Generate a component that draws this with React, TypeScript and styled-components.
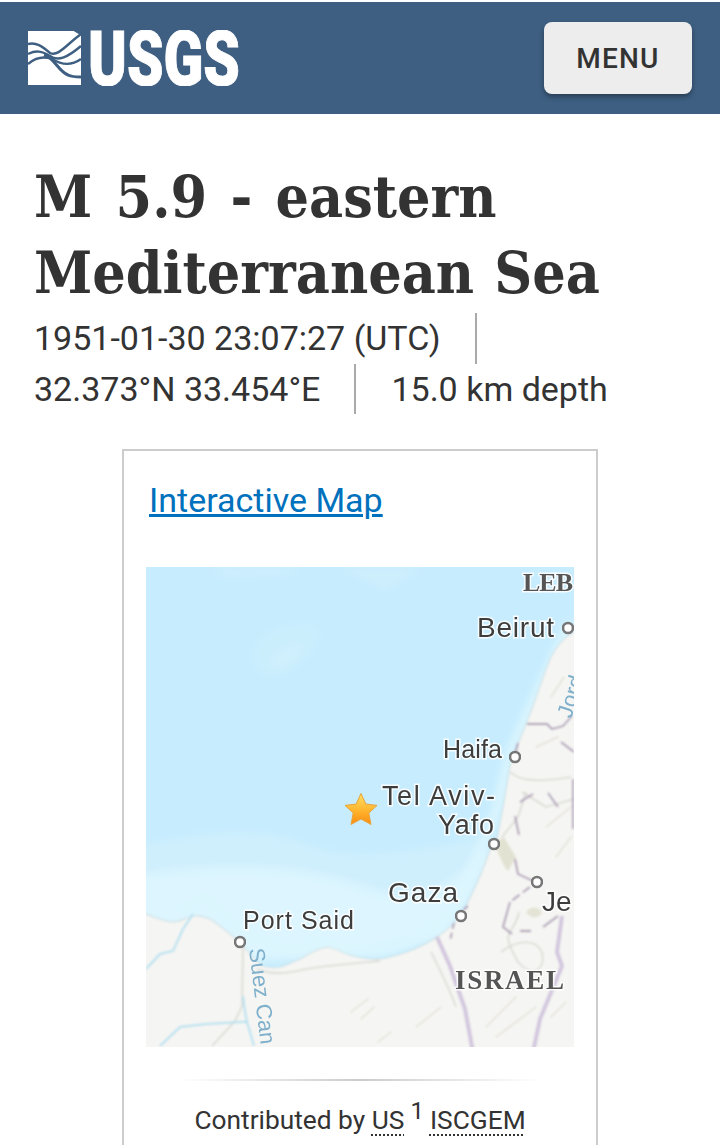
import React from "react";
import styled, { createGlobalStyle } from "styled-components";

const Global = createGlobalStyle`
  html, body { margin: 0; padding: 0; background: #fff; }
  body { font-family: Roboto, "Liberation Sans", sans-serif; color: #333; }
`;

const Page = styled.div`
  height: 1145px;
  overflow: hidden;
  padding-top: 2px;
  box-sizing: border-box;
`;

const Header = styled.header`
  height: 112px;
  background: #3e5f82;
  display: flex;
  align-items: center;
  justify-content: space-between;
  padding: 0 28px;
  box-sizing: border-box;
`;

const LogoSvg = styled.svg`
  display: block;
  width: 212px;
  height: 56px;
`;

const LogoWord = styled.text`
  font-family: Roboto, "Liberation Sans", sans-serif;
  font-weight: 900;
  font-size: 76px;
  fill: #fff;
  stroke: #fff;
  stroke-width: 1px;
`;

const MenuButton = styled.button`
  width: 148px;
  height: 72px;
  border: 0;
  border-radius: 8px;
  background: #ededed;
  box-shadow: 0 3px 5px rgba(0, 0, 0, 0.35);
  color: #333;
  font-family: Roboto, sans-serif;
  font-size: 28px;
  font-weight: 500;
  letter-spacing: 1.2px;
  padding: 0;
`;

const Main = styled.main`
  padding: 0 34px;
`;

const Title = styled.h1`
  margin: 45px 0 0;
  font-family: "DejaVu Serif Condensed", "DejaVu Serif", serif;
  font-weight: 700;
  font-size: 58.5px;
  line-height: 76px;
  word-spacing: 2px;
  color: #333;
`;

const TitleLead = styled.span`
  word-spacing: 5px;
`;

const MetaList = styled.ul`
  list-style: none;
  margin: 2px 0 0;
  padding: 0;
  display: flex;
  flex-wrap: wrap;
`;

const MetaItem = styled.li<{ $last?: boolean }>`
  font-size: 34px;
  line-height: 50.5px;
  color: #333;
  padding-right: 34px;
  margin-right: 35px;
  border-right: ${(p) => (p.$last ? "0" : "2px solid #aaa")};
`;

const Card = styled.section`
  width: 476px;
  height: 800px;
  box-sizing: border-box;
  margin: 35px auto 0;
  border: 2px solid #ccc;
  padding: 26px 22px 0;
`;

const MapLink = styled.a`
  display: block;
  font-size: 34px;
  line-height: 46px;
  color: #0071bc;
  text-decoration: underline;
  margin-left: 3px;
`;

const MapSvg = styled.svg`
  display: block;
  width: 428px;
  height: 480px;
  margin-top: 44px;
`;

const MapLabel = styled.text<{ $serif?: boolean; $size?: number }>`
  font-family: ${(p) => (p.$serif ? '"Liberation Serif", serif' : '"Liberation Sans", sans-serif')};
  font-weight: ${(p) => (p.$serif ? 700 : 400)};
  font-size: ${(p) => p.$size ?? 28}px;
  fill: ${(p) => (p.$serif ? "#555" : "#3c3c3c")};
  stroke: rgba(255, 255, 255, 0.85);
  stroke-width: 3px;
  paint-order: stroke;
`;

const WaterLabel = styled.text`
  font-family: "Liberation Sans", sans-serif;
  font-size: 22px;
  fill: #7fb0cb;
`;

const Divider = styled.hr`
  width: 364px;
  height: 2px;
  border: 0;
  margin: 32px auto 0;
  background: linear-gradient(to right, rgba(0, 0, 0, 0), rgba(0, 0, 0, 0.2), rgba(0, 0, 0, 0));
`;

const Contributors = styled.p`
  margin: 19px 0 0;
  text-align: center;
  font-size: 26.3px;
  line-height: 40px;
  color: #333;
  white-space: nowrap;
`;

const Abbr = styled.abbr`
  text-decoration: underline dotted #333 2px;
  text-underline-offset: 5px;
`;

const Sup = styled.sup`
  font-size: 24px;
  line-height: 0;
  margin: 0 6px;
`;

const cities: [number, number][] = [
  [422, 61],
  [369, 190],
  [348, 277],
  [315, 349],
  [391, 315],
  [94, 375],
];

const coast =
  "M-10 343 L0 347 C10 351 20 355 27 355 C35 355 42 349 49 349 C55 348 60 351 64 352 C74 358 85 368 94 375 C102 385 110 395 117 399 C124 401 130 401 134 400 C142 398 148 394 154 392 C163 387 172 381 181 380 C190 381 198 387 207 389 C216 391 225 393 234 392 C243 391 252 388 261 385 C272 381 282 376 291 370 C300 364 308 357 314 349 C322 337 328 322 334 309 C339 297 343 286 347 275 L351 272 L358 235 L364 199 C369 183 376 167 382 152 C390 132 396 112 404 92 C410 80 418 70 428 65 L440 58";

const land = `${coast} L440 495 L-10 495 Z`;

export default function App() {
  return (
    <>
      <Global />
      <Page>
        <Header>
          <LogoSvg viewBox="0 0 212 56" aria-label="USGS">
            <rect x="0" y="1" width="53" height="54" fill="#fff" />
            <g fill="none" stroke="#3e5f82" strokeLinecap="butt">
              <path d="M44 0 L54 0 L54 6 Z" fill="#3e5f82" stroke="none" />
              <path d="M0 14 C8 12 14 16 22 23 C30 27 38 15 53 4" strokeWidth="2.4" />
              <path d="M0 24 C8 20 14 21 22 26 C30 32 40 27 53 16" strokeWidth="2.4" />
              <path d="M0 34 C8 27 16 26 24 29 C32 34 42 37 53 29" strokeWidth="2.4" />
              <path d="M16 25 C26 27 30 41 40 45 C44 47 50 47 53 47" strokeWidth="3" />
            </g>
            <LogoWord x="60" y="55" textLength="152" lengthAdjust="spacingAndGlyphs">
              USGS
            </LogoWord>
          </LogoSvg>
          <MenuButton>MENU</MenuButton>
        </Header>
        <Main>
          <Title>
            <TitleLead>M 5.9 - eastern</TitleLead>
            <br />
            Mediterranean Sea
          </Title>
          <MetaList>
            <MetaItem>1951-01-30 23:07:27 (UTC)</MetaItem>
            <MetaItem>32.373°N 33.454°E</MetaItem>
            <MetaItem $last>15.0 km depth</MetaItem>
          </MetaList>
        </Main>
        <Card>
          <MapLink href="#">Interactive Map</MapLink>
          <MapSvg viewBox="0 0 428 480">
            <defs>
              <filter id="soft" x="-5%" y="-5%" width="110%" height="110%">
                <feGaussianBlur stdDeviation="1" />
              </filter>
              <filter id="softer" x="-10%" y="-10%" width="120%" height="120%">
                <feGaussianBlur stdDeviation="4" />
              </filter>
              <filter id="text" x="-5%" y="-20%" width="110%" height="140%">
                <feGaussianBlur stdDeviation="0.4" />
              </filter>
              <linearGradient id="star" x1="0" y1="0" x2="0" y2="1">
                <stop offset="0" stopColor="#ffe066" />
                <stop offset="0.55" stopColor="#ffb52e" />
                <stop offset="1" stopColor="#fb8b12" />
              </linearGradient>
              <clipPath id="frame">
                <rect width="428" height="480" />
              </clipPath>
            </defs>
            <g clipPath="url(#frame)">
              <rect width="428" height="480" fill="#c6ecfe" />
              <g filter="url(#softer)">
                <path d="M105 90 C105 70 130 55 165 55 C185 60 170 85 150 100 C135 115 110 115 105 90 Z" fill="#cbeefd" />
                <path d="M125 95 C130 85 145 75 155 78 C155 90 140 105 125 100 Z" fill="#d0f0fd" />
                <path d="M60 0 L160 0 L140 10 L80 12 Z M190 0 L280 0 L240 25 Z" fill="#cdeefd" />
                <path d="M-20 280 C60 265 110 255 170 280 C220 295 280 280 340 270 L345 290 L300 355 L-20 340 Z" fill="#cfeffd" />
                <path d="M-20 310 C70 295 150 295 220 320 C260 335 300 330 335 285 L345 290 L300 370 L200 390 L100 395 L-20 345 Z" fill="#dcf5fe" />
              </g>
              <path d="M30 345 L60 330 C100 370 130 390 170 376 L230 385 C275 378 310 350 325 310 L350 245 L365 185 L385 140 L425 55" fill="none" stroke="#dcf6fe" strokeWidth="10" filter="url(#softer)" />
              <g filter="url(#soft)">
                <path d={land} fill="#f5f5f3" />
                <path d={coast} fill="none" stroke="#cfe2e6" strokeWidth="1.2" />
                <path d="M348 275 C352 285 356 298 362 304 L370 290 L358 270 Z" fill="#e2e2d3" />
                <path d="M380 345 C385 338 395 340 396 346 C392 352 384 352 380 345 Z" fill="#e4e4d6" />
                <g fill="none" stroke="#d8d8d2" strokeWidth="1.6">
                  <path d="M97 379 L96 439 L89 454 L66 479" />
                  <path d="M111 402 C125 408 140 407 160 402 C185 398 210 396 234 394" />
                  <path d="M285 385 C295 405 305 425 310 440" />
                  <path d="M373 345 C368 370 352 360 372 395 C385 410 400 405 396 385 C390 372 372 372 355 385" />
                  <path d="M364 205 C375 215 395 215 425 210 M376 225 L400 240 L428 232 M356 270 L372 250 L380 225" />
                </g>
                <g fill="none" stroke="#e2e0d6" strokeWidth="1.4" strokeLinecap="round">
                  <path d="M205 445 L222 432 M215 452 L228 440 M270 460 L295 440 M232 475 L245 465 M340 460 L370 430 M350 470 L390 440" />
                  <path d="M405 130 L418 110 M390 180 L412 170 M400 260 L425 240 M410 290 L425 270 M405 450 L420 435" />
                </g>
                <g fill="none" stroke="#b4e1f1" strokeWidth="2">
                  <path d="M0 402 L14 387 L27 384 L37 362 L47 347" />
                  <path d="M14 479 L34 460 L60 457 L94 455 L101 455 L108 479" />
                  <path d="M97 429 L99 445 L101 455" />
                </g>
                <g fill="none" stroke="#d2c6de" strokeWidth="4">
                  <path d="M291 370 L304 399 L319 442 L327 485" />
                  <path d="M416 349 L411 385 L416 399 L394 452 L387 485" />
                </g>
                <g fill="none" stroke="#a898b3" strokeWidth="1.8">
                  <path d="M381 157 L401 157 L406 162 L417 159 L426 149" />
                  <path d="M369 292 L372 307 L387 314" />
                  <path d="M384 320 L364 335" strokeDasharray="9 4" />
                  <path d="M364 335 L357 360 L366 367" />
                  <path d="M374 364 L385 364 M397 360 L412 349" />
                  <path d="M322 339 L316 344 M308 356 L304 374" strokeDasharray="6 4" />
                  <path d="M374 235 L387 227 M369 249 L373 268 M372 176 L368 192" />
                  <path d="M427 212 L427 262 M415 175 L428 185 M402 226 L412 240" />
                </g>
              </g>
              <g filter="url(#text)">
                <WaterLabel transform="translate(103 382) rotate(83)">Suez Can</WaterLabel>
                <WaterLabel transform="translate(425 152) rotate(-72)">Jord</WaterLabel>
                <MapLabel $serif x="377" y="24" $size={26} textLength="50">LEB</MapLabel>
                <MapLabel x="331" y="70" textLength="77">Beirut</MapLabel>
                <MapLabel x="297" y="191" $size={25} textLength="59">Haifa</MapLabel>
                <MapLabel x="236" y="238" $size={27} textLength="113">Tel Aviv-</MapLabel>
                <MapLabel x="292" y="267" $size={27} textLength="56">Yafo</MapLabel>
                <MapLabel x="242" y="335" textLength="70">Gaza</MapLabel>
                <MapLabel x="97" y="362" $size={25} textLength="111">Port Said</MapLabel>
                <MapLabel x="396" y="344">Je</MapLabel>
                <MapLabel $serif x="309" y="422" $size={27} textLength="109">ISRAEL</MapLabel>
              </g>
              {cities.map(([x, y]) => (
                <circle key={`${x}-${y}`} cx={x} cy={y} r="5" fill="#fff" stroke="#777" strokeWidth="2.6" filter="url(#text)" />
              ))}
              <path
                d="M215 226.5 L219.8 237 L231 238.4 L222.8 246 L225 257.5 L215 252 L205 257.5 L207.2 246 L199 238.4 L210.2 237 Z"
                fill="url(#star)"
                stroke="#e8a33a"
                strokeWidth="1"
                strokeLinejoin="round"
              />
            </g>
          </MapSvg>
          <Divider />
          <Contributors>
            Contributed by <Abbr>US</Abbr>
            <Sup>1</Sup>
            <Abbr>ISCGEM</Abbr>
          </Contributors>
        </Card>
      </Page>
    </>
  );
}
